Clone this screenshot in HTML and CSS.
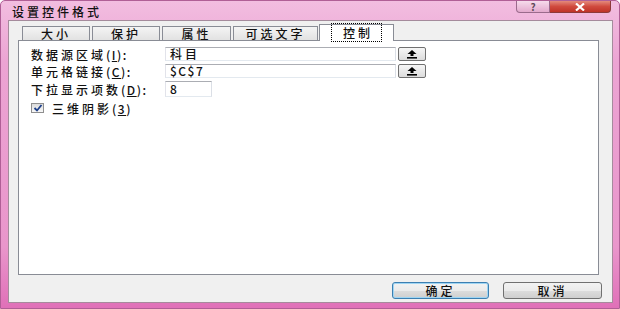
FILE: index.html
```html
<!DOCTYPE html>
<html lang="zh-CN">
<head>
    <meta charset="UTF-8">
    <title>设置控件格式</title>
    <link rel="stylesheet" href="styles.css">
</head>
<body>

<div class="window">
    <!-- 标题栏 -->
    <div class="titlebar">
        <span class="title">设置控件格式</span>
        <div class="caption-btns">
            <span class="help-btn">?</span>
            <span class="close-btn">
                <svg width="14" height="8" viewBox="0 0 14 8"><path d="M3 0.5 L11 7.5 M11 0.5 L3 7.5" stroke="#fff" stroke-width="2.2"/></svg>
            </span>
        </div>
    </div>

    <div class="client">
        <!-- 选项卡 -->
        <div class="tabs">
            <div class="tab t1">大小</div>
            <div class="tab t2">保护</div>
            <div class="tab t3">属性</div>
            <div class="tab t4">可选文字</div>
            <div class="tab active"><span class="focus">控制</span></div>
        </div>

        <!-- 控制面板 -->
        <div class="panel">
            <div class="row">
                <span class="label">数据源区域<span class="lat">(<u>I</u>):</span></span>
                <span class="field wide">科目</span>
                <span class="pick-btn">
                    <svg width="12" height="9" viewBox="0 0 12 9"><path d="M6 0 L10.5 4 L7.5 4 L7.5 6 L4.5 6 L4.5 4 L1.5 4 Z" fill="#000"/><rect x="1" y="7" width="10" height="1.6" fill="#000"/></svg>
                </span>
            </div>
            <div class="row">
                <span class="label">单元格链接<span class="lat">(<u>C</u>):</span></span>
                <span class="field wide lat">$C$7</span>
                <span class="pick-btn">
                    <svg width="12" height="9" viewBox="0 0 12 9"><path d="M6 0 L10.5 4 L7.5 4 L7.5 6 L4.5 6 L4.5 4 L1.5 4 Z" fill="#000"/><rect x="1" y="7" width="10" height="1.6" fill="#000"/></svg>
                </span>
            </div>
            <div class="row">
                <span class="label">下拉显示项数<span class="lat">(<u>D</u>):</span></span>
                <span class="field short">8</span>
            </div>
            <div class="check-row">
                <span class="checkbox">
                    <svg width="10" height="8" viewBox="0 0 10 8"><path d="M1.5 4 L4 6.5 L8.5 1" stroke="#1c3f8a" stroke-width="1.8" fill="none"/></svg>
                </span>
                <span class="check-label">三维阴影<span class="lat">(<u>3</u>)</span></span>
            </div>
        </div>

        <!-- 按钮 -->
        <div class="actions">
            <button class="btn default">确定</button>
            <button class="btn">取消</button>
        </div>
    </div>
</div>

</body>
</html>
```

FILE: styles.css
```css
body {
    margin: 0;
    font-family: "Noto Sans CJK SC", "DejaVu Sans", sans-serif;
    font-size: 12px;
    font-weight: 500;
    letter-spacing: 3px;
    color: #111;
}
.lat {
    letter-spacing: 1.5px;
}
.window {
    width: 620px;
    height: 309px;
    box-sizing: border-box;
    background: linear-gradient(#f2bde0, #eca4d3 20%, #e996cb 80%, #e070b8);
    border: 1px solid #b05f96;
    border-radius: 5px 5px 0 0;
    padding: 0 6px 5px 7px;
    display: flex;
    flex-direction: column;
}
.titlebar {
    height: 19px;
    display: flex;
    justify-content: space-between;
    align-items: flex-start;
}
.title {
    margin: 3px 0 0 4px;
    line-height: 15px;
}
.caption-btns {
    display: flex;
    margin-right: 2px;
}
.help-btn {
    width: 34px;
    height: 12px;
    box-sizing: border-box;
    border: 1px solid #9a6a8c;
    border-top: none;
    border-radius: 0 0 0 4px;
    background: linear-gradient(#f6dcec, #e3a9cd);
    color: #5e4a57;
    font-size: 10px;
    font-weight: bold;
    letter-spacing: 0;
    line-height: 11px;
    text-align: center;
}
.close-btn {
    width: 61px;
    height: 12px;
    box-sizing: border-box;
    border: 1px solid #8d3a3a;
    border-top: none;
    border-left: none;
    border-radius: 0 0 4px 0;
    background: linear-gradient(#e48a7c, #d04a3e 50%, #bf3328);
    display: flex;
    justify-content: center;
    align-items: center;
}
.client {
    flex: 1;
    background-color: #f0f0f0;
    border: 1px solid #a58b9c;
    display: flex;
    flex-direction: column;
}
.tabs {
    display: flex;
    align-items: flex-end;
    gap: 2px;
    margin: 3px 0 0 13px;
    height: 16px;
}
.tab {
    height: 14px;
    box-sizing: border-box;
    border: 1px solid #898c95;
    border-bottom: none;
    background: linear-gradient(#f4f4f4, #e2e2e2);
    text-align: center;
    line-height: 13px;
}
.t1, .t2 { width: 68px; }
.t3 { width: 69px; }
.t4 { width: 85px; }
.tab.active {
    width: 75px;
    height: 17px;
    margin: 0 0 -1px -1px;
    background: #fff;
    position: relative;
    z-index: 1;
    line-height: 16px;
}
.focus {
    border: 1px dotted #000;
    padding: 0 8px 0 11px;
}
.panel {
    margin: 0 13px 0 9px;
    height: 235px;
    box-sizing: border-box;
    background: #fff;
    border: 1px solid #898c95;
    padding: 6px 0 0 12px;
}
.row {
    display: flex;
    align-items: center;
    height: 14px;
    margin-bottom: 3px;
}
.label {
    width: 134px;
    flex-shrink: 0;
}
.field {
    height: 14px;
    box-sizing: border-box;
    border: 1px solid #abadb3;
    border-color: #abadb3 #dbdfe6 #e3e9ef #e2e3ea;
    padding-left: 4px;
    line-height: 12px;
}
.wide { width: 231px; }
.short {
    width: 47px;
    height: 16px;
    line-height: 14px;
}
.row:nth-child(3) {
    height: 16px;
    margin-top: 1px;
}
.pick-btn {
    width: 28px;
    height: 14px;
    box-sizing: border-box;
    margin-left: 2px;
    border: 1px solid #707070;
    border-radius: 2px;
    background: linear-gradient(#f6f6f6, #dcdcdc);
    display: flex;
    justify-content: center;
    align-items: center;
}
.check-row {
    display: flex;
    align-items: center;
    margin-top: 5px;
    height: 12px;
}
.checkbox {
    width: 13px;
    height: 10px;
    box-sizing: border-box;
    border: 1px solid #8f8f8f;
    background: linear-gradient(#dcdcdc, #f8f8f8);
    display: flex;
    justify-content: center;
    align-items: center;
    margin-right: 8px;
}
.actions {
    display: flex;
    justify-content: flex-end;
    gap: 14px;
    margin: 7px 10px 0 0;
}
.btn {
    height: 17px;
    padding: 0;
    font-family: inherit;
    font-size: 12px;
    font-weight: 500;
    letter-spacing: 3px;
    line-height: 15px;
    color: #111;
    border: 1px solid #707070;
    border-radius: 3px;
    background: linear-gradient(#f2f2f2, #ebebeb 50%, #dddddd 51%, #cfcfcf);
}
.btn.default {
    width: 97px;
    border-color: #3c7fb1;
    box-shadow: inset 0 0 0 1px #9fd5f3;
}
.btn:not(.default) { width: 99px; }
```
